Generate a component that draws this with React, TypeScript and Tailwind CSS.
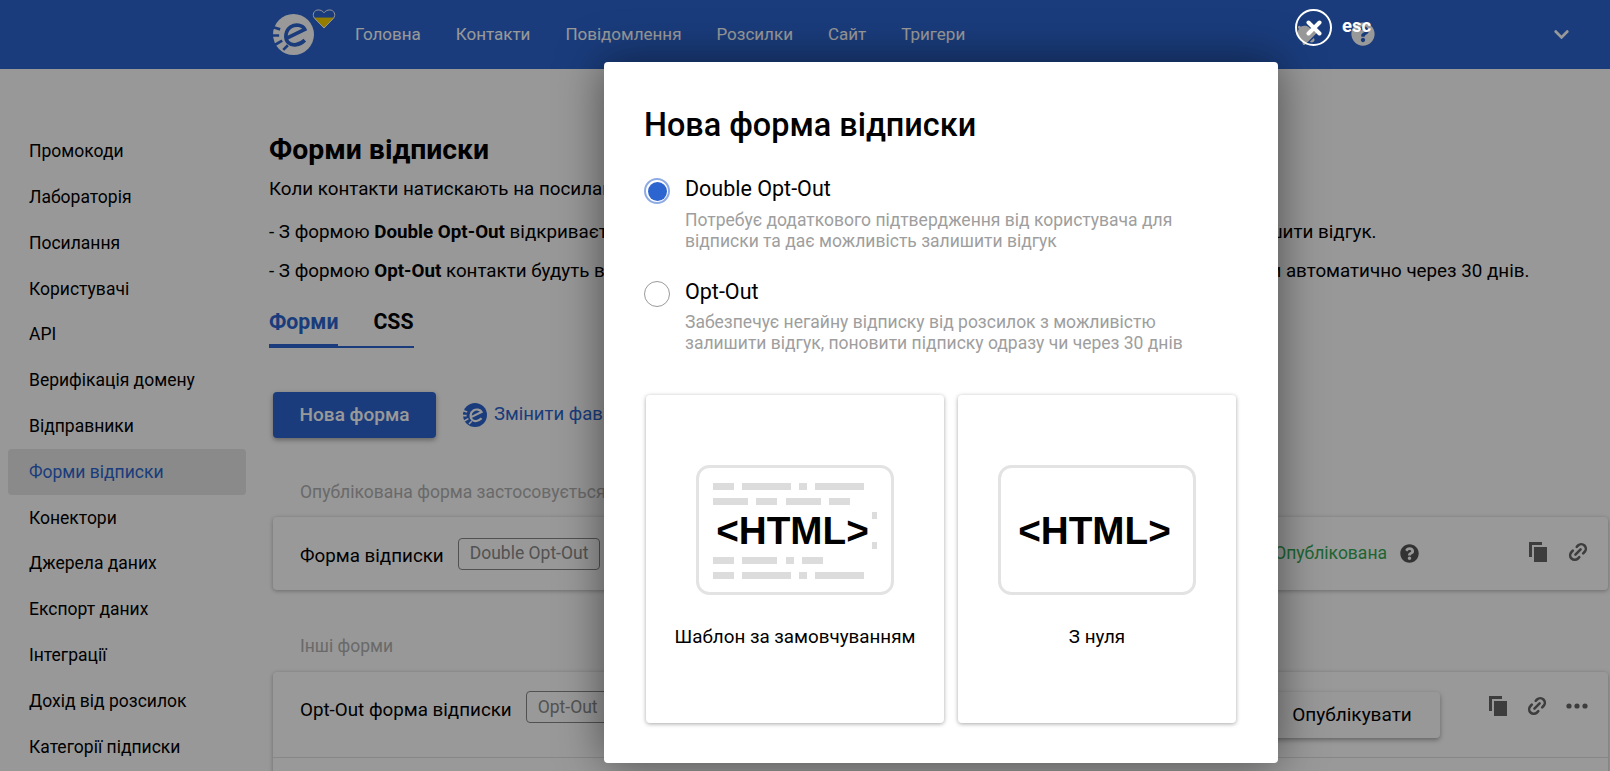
import React from "react";
import { FaBell, FaQuestionCircle, FaChevronDown } from "react-icons/fa";

const PRIMARY = "#2c65cf";

function Logo({ size, fg, cut }: { size: number; fg: string; cut: string }) {
  return (
    <svg width={size} height={size} viewBox="0 0 40 40" className="shrink-0">
      <circle cx="20" cy="20" r="20" fill={fg} />
      <path d="M13.5 23.5 L31 15 C29 10.5 22 9.5 17.5 12.5 C12 16 11 24 15 28 C19 31.5 26 30.5 31 25.5" fill="none" stroke={cut} strokeWidth="3.6" />
      <path d="M-1 12.5 L7 15 M-1 21 L6 21 M2 30 L9 26 M10 35 L14.5 30.5" fill="none" stroke={cut} strokeWidth="2.6" />
    </svg>
  );
}

function Heart() {
  return (
    <svg width="24" height="20" viewBox="0 0 24 21" className="shrink-0">
      <defs>
        <clipPath id="hb"><path d="M12 20 L2.2 10 C-1 6 1.5 1 6 1 C8.5 1 10.5 2 12 4 C13.5 2 15.5 1 18 1 C22.5 1 25 6 21.8 10 Z" /></clipPath>
      </defs>
      <g clipPath="url(#hb)">
        <rect x="0" y="0" width="24" height="10" fill={PRIMARY} />
        <rect x="0" y="9" width="24" height="12" fill="#f5d000" />
      </g>
      <path d="M12 20 L2.2 10 C-1 6 1.5 1 6 1 C8.5 1 10.5 2 12 4 C13.5 2 15.5 1 18 1 C22.5 1 25 6 21.8 10 Z" fill="none" stroke="#fff" strokeWidth="1" />
    </svg>
  );
}

function CopyIcon() {
  return (
    <svg width="18" height="20" viewBox="0 0 18 20" className="shrink-0">
      <path d="M0 0 H13 V3 H3 V15 H0 Z" fill="#666" />
      <rect x="5" y="5" width="13" height="15" fill="#666" />
    </svg>
  );
}

function LinkIcon() {
  return (
    <svg width="22" height="22" viewBox="0 0 24 24" className="shrink-0 -rotate-45" fill="none" stroke="#666" strokeWidth="2.8" strokeLinecap="round">
      <path d="M9 17H7A5 5 0 0 1 7 7h2" />
      <path d="M15 7h2a5 5 0 1 1 0 10h-2" />
      <path d="M8 12h8" />
    </svg>
  );
}

function Dots() {
  return (
    <svg width="22" height="6" viewBox="0 0 22 6" className="shrink-0" fill="#666">
      <circle cx="3" cy="3" r="2.6" />
      <circle cx="11" cy="3" r="2.6" />
      <circle cx="19" cy="3" r="2.6" />
    </svg>
  );
}

const barRow1: [number, number][] = [[17, 21], [46, 49], [103, 8], [119, 49]];
const barRow2: [number, number][] = [[17, 35], [60, 21], [90, 35], [133, 21]];
const barRow3: [number, number][] = [[17, 21], [46, 35], [90, 8], [106, 21]];
const barRows: [number, [number, number][]][] = [[18, barRow1], [33, barRow2], [92, barRow3], [107, barRow1]];

function HtmlPicture({ bars }: { bars: boolean }) {
  const c = "#dcdcdc";
  return (
    <svg width="198" height="130" viewBox="0 0 198 130" className="shrink-0">
      <rect x="1.5" y="1.5" width="195" height="127" rx="12" fill="#fff" stroke="#e3e3e3" strokeWidth="3" />
      {bars && barRows.map(([y, row]) => row.map(([x, w]) => (
        <rect key={`${y}-${x}`} x={x} y={y} width={w} height="7" fill={c} />
      )))}
      {bars && (
        <>
          <rect x="176" y="47" width="5" height="7" fill={c} />
          <rect x="176" y="77" width="5" height="7" fill={c} />
        </>
      )}
      <text x="96.5" y="79" textAnchor="middle" fontFamily="'Liberation Sans', Arial, sans-serif" fontWeight="700" fontSize="38.7" fill="#000">&lt;HTML&gt;</text>
    </svg>
  );
}

const side = ["Промокоди", "Лабораторія", "Посилання", "Користувачі", "API", "Верифікація домену", "Відправники", "Форми відписки", "Конектори", "Джерела даних", "Експорт даних", "Інтеграції", "Дохід від розсилок", "Категорії підписки"];
const nav = ["Головна", "Контакти", "Повідомлення", "Розсилки", "Сайт", "Тригери"];

function Badge({ children, className }: { children: React.ReactNode; className?: string }) {
  return (
    <span className={`inline-flex h-8 shrink-0 items-center rounded border border-[#888] px-[11px] text-[17.5px] text-[#8a8a8a] ${className ?? ""}`}>{children}</span>
  );
}

export default function App() {
  return (
    <div className="relative h-[771px] w-[1610px] overflow-hidden bg-[#fdfdfd] text-[17.5px] text-black" style={{ fontFamily: "Roboto, 'Noto Sans', sans-serif" }}>
      <header className="flex h-[69px] items-center bg-[#2c65cf] pl-[273px]">
        <div className="relative h-[41px] w-[82px] shrink-0">
          <Logo size={41} fg="#fff" cut={PRIMARY} />
          <div className="absolute left-[39px] top-[-5px]"><Heart /></div>
        </div>
        <nav className="flex gap-[35px] text-[17px] text-white">
          {nav.map((n) => <span key={n}>{n}</span>)}
        </nav>
        <div className="ml-auto flex items-center pr-[40px]">
          <FaBell size={22} color="#fff" className="mr-[34px] -mt-[2px] -rotate-45" />
          <FaQuestionCircle size={24} color="#fff" className="mb-[2px] mr-[178px]" />
          <FaChevronDown size={17} color="#fff" />
        </div>
      </header>

      <div className="flex">
        <aside className="w-[254px] shrink-0 pl-2 pr-2 pt-[59.5px]">
          {side.map((s) => (
            <div key={s} className={`flex h-[45.8px] items-center rounded pl-[21px] ${s === "Форми відписки" ? "bg-[#e6e6e6] text-[#2c65cf]" : ""}`}>{s}</div>
          ))}
        </aside>

        <main className="min-w-0 flex-1 pl-[15px]">
          <h1 className="mt-[65px] h-8 text-[28.4px] font-bold leading-8">Форми відписки</h1>
          <p className="mt-[11px] h-6 whitespace-nowrap text-[18.8px] leading-6">Коли контакти натискають на посилання відписки у листі, вони потрапляють на форму відписки.</p>
          <p className="mt-[19px] h-6 whitespace-nowrap text-[18.8px] leading-6">- З формою <b>Double Opt-Out</b> відкривається сторінка, де контакти мають підтвердити відписку і за бажанням залишити відгук.</p>
          <p className="mt-[15px] h-6 whitespace-nowrap text-[18.8px] leading-6">- З формою <b>Opt-Out</b> контакти будуть відписані одразу, вони можуть залишити відгук, поновити підписку одразу чи автоматично через 30 днів.</p>
          <div className="mt-[23px] flex h-[42px] w-[145px] items-start gap-[35px] border-b-2 border-[#2c65cf] text-[21.25px] font-bold leading-8">
            <span className="h-[42px] shrink-0 border-b-4 border-[#2c65cf] text-[#2c65cf]">Форми</span>
            <span>CSS</span>
          </div>
          <div className="mt-[44px] flex items-center pl-1">
            <button className="h-[46px] w-[163px] rounded bg-[#2c65cf] text-[19px] font-medium text-white shadow-[0_2px_5px_rgba(0,0,0,0.35)]">Нова форма</button>
            <span className="ml-[27px]"><Logo size={24} fg={PRIMARY} cut="#fff" /></span>
            <span className="ml-[7px] text-[18.5px] text-[#2c65cf]">Змінити фавікон</span>
          </div>
          <div className="mt-[42px] h-6 pl-[31px] leading-6 text-[#b0b0b0]">Опублікована форма застосовується до всіх контактів</div>

          <section className="ml-1 mt-[13px] flex h-[73px] w-[1335px] items-center rounded bg-white pl-[27px] pr-[19px] shadow-[0_1px_4px_rgba(0,0,0,0.3)]">
            <span className="mr-[14px] mt-[6px] text-[18.8px]">Форма відписки</span>
            <Badge>Double Opt-Out</Badge>
            <span className="ml-auto text-[#33a853]">Опублікована</span>
            <FaQuestionCircle size={19} color="#555" className="ml-[13px] mr-[110px]" />
            <span className="-mt-1 mr-[20px]"><CopyIcon /></span>
            <span className="-mt-1"><LinkIcon /></span>
          </section>

          <div className="mt-[44px] h-6 pl-[31px] leading-6 text-[#b0b0b0]">Інші форми</div>
          <section className="ml-1 mt-[14px] w-[1335px] rounded bg-white shadow-[0_1px_4px_rgba(0,0,0,0.3)]">
            <div className="flex h-[86px] items-center border-b border-[#e2e2e2] pl-[27px] pr-[20px]">
              <span className="mb-[8px] mr-[14px] text-[18.8px]">Opt-Out форма відписки</span>
              <Badge className="mb-[15px]">Opt-Out</Badge>
              <button className="ml-auto mr-[49px] mt-[1px] h-[46px] w-[176px] rounded bg-[#fdfdfd] text-[19px] shadow-[0_2px_5px_rgba(0,0,0,0.35)]">Опублікувати</button>
              <div className="mb-[18px] flex items-center">
                <span className="mr-[19px]"><CopyIcon /></span>
                <span className="mr-[18px]"><LinkIcon /></span>
                <Dots />
              </div>
            </div>
            <div className="h-[80px]" />
          </section>
        </main>
      </div>

      <div className="absolute inset-0 bg-black/40" />

      <div className="absolute left-[1295px] top-[9px] flex items-center gap-[11px]">
        <span className="flex h-[37px] w-[37px] items-center justify-center rounded-full border-2 border-white">
          <svg width="16" height="16" viewBox="0 0 16 16" stroke="#fff" strokeWidth="4" strokeLinecap="round"><path d="M2.5 2.5 L13.5 13.5 M13.5 2.5 L2.5 13.5" /></svg>
        </span>
        <span className="-ml-[1px] -mt-[1px] text-[18.5px] font-bold text-white">esc</span>
      </div>

      <div className="absolute left-[604px] top-[62px] h-[701px] w-[674px] rounded bg-white px-10 shadow-[0_0_45px_rgba(0,0,0,0.5)]">
        <h2 className="mt-[44px] text-[32.4px] font-medium leading-[38px]">Нова форма відписки</h2>
        <div className="mt-[33px] flex gap-[15px]">
          <span className="mt-[1px] flex h-[26px] w-[26px] shrink-0 items-center justify-center rounded-full border-2 border-[#8fabe3]">
            <span className="h-[19px] w-[19px] rounded-full bg-[#2c65cf]" />
          </span>
          <div>
            <div className="text-[21.5px] leading-6">Double Opt-Out</div>
            <div className="mt-[9px] w-[510px] text-[17.5px] leading-[21px] text-[#9e9e9e]">Потребує додаткового підтвердження від користувача для відписки та дає можливість залишити відгук</div>
          </div>
        </div>
        <div className="mt-[28px] flex gap-[15px]">
          <span className="mt-[1px] h-[26px] w-[26px] shrink-0 rounded-full border border-[#9a9a9a]" />
          <div>
            <div className="text-[21.5px] leading-6">Opt-Out</div>
            <div className="mt-[8px] w-[510px] text-[17.5px] leading-[21px] text-[#9e9e9e]">Забезпечує негайну відписку від розсилок з можливістю залишити відгук, поновити підписку одразу чи через 30 днів</div>
          </div>
        </div>
        <div className="ml-[2px] mt-[41px] flex gap-[14px]">
          <div className="flex h-[328px] w-[298px] flex-col items-center rounded bg-white pt-[70px] shadow-[0_1px_4px_rgba(0,0,0,0.35)]">
            <HtmlPicture bars />
            <div className="mt-[30px] text-[18.8px] leading-6">Шаблон за замовчуванням</div>
          </div>
          <div className="flex h-[328px] w-[278px] flex-col items-center rounded bg-white pt-[70px] shadow-[0_1px_4px_rgba(0,0,0,0.35)]">
            <HtmlPicture bars={false} />
            <div className="mt-[30px] text-[18.8px] leading-6">З нуля</div>
          </div>
        </div>
      </div>
    </div>
  );
}
